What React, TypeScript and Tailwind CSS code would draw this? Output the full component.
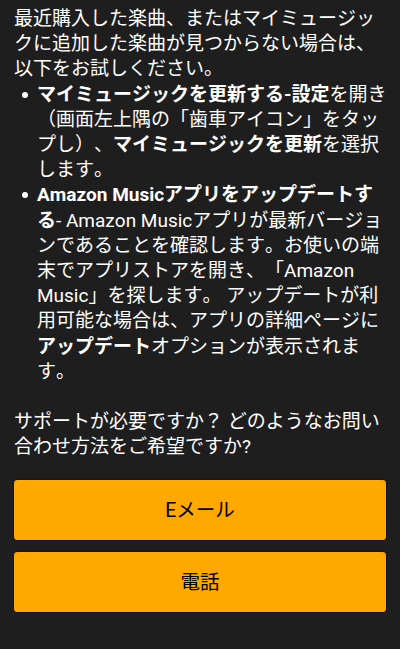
import React from "react";

const font = {
  fontFamily: 'Roboto, "Noto Sans CJK JP", "Noto Sans", sans-serif',
};

function L({ children }: { children: React.ReactNode }) {
  return <div className="whitespace-nowrap">{children}</div>;
}

function Bullet({ children }: { children: React.ReactNode }) {
  return (
    <div className="relative pl-[23px]">
      <span className="absolute left-[8px] top-[10px] w-[6px] h-[6px] rounded-full bg-white" />
      {children}
    </div>
  );
}

export default function App() {
  return (
    <div
      className="w-[400px] h-[649px] bg-[#1e1e1e] text-white overflow-hidden px-[14px] pt-[6px] text-[19px] leading-[25.2px] [text-spacing-trim:space-all] [font-kerning:none]"
      style={font}
    >
      <div>
        <L>最近購入した楽曲、またはマイミュージッ</L>
        <L>クに追加した楽曲が見つからない場合は、</L>
        <L>以下をお試しください。</L>
      </div>
      <Bullet>
        <L>
          <b>マイミュージックを更新する-設定</b>を開き
        </L>
        <L>（画面左上隅の「歯車アイコン」をタッ</L>
        <L>
          プし）、<b>マイミュージックを更新</b>を選択
        </L>
        <L>します。</L>
      </Bullet>
      <Bullet>
        <L>
          <b>Amazon Musicアプリをアップデートす</b>
        </L>
        <L>
          <b>る</b>- Amazon Musicアプリが最新バージョ
        </L>
        <L>ンであることを確認します。お使いの端</L>
        <L>末でアプリストアを開き、「Amazon</L>
        <L>Music」を探します。 アップデートが利</L>
        <L>用可能な場合は、アプリの詳細ページに</L>
        <L>
          <b>アップデート</b>オプションが表示されま
        </L>
        <L>す。</L>
      </Bullet>
      <div className="mt-[25px]">
        <L>サポートが必要ですか？ どのようなお問い</L>
        <L>合わせ方法をご希望ですか?</L>
      </div>
      <div className="mt-[20px] flex flex-col gap-[10px] -mx-[1px]">
        <button
          className="h-[62px] w-full rounded-[4px] bg-[#ffa800] border border-[#10112a] text-black text-[19.5px]"
          style={font}
        >
          Eメール
        </button>
        <button
          className="h-[62px] w-full rounded-[4px] bg-[#ffa800] border border-[#10112a] text-black text-[19.5px]"
          style={font}
        >
          電話
        </button>
      </div>
    </div>
  );
}
